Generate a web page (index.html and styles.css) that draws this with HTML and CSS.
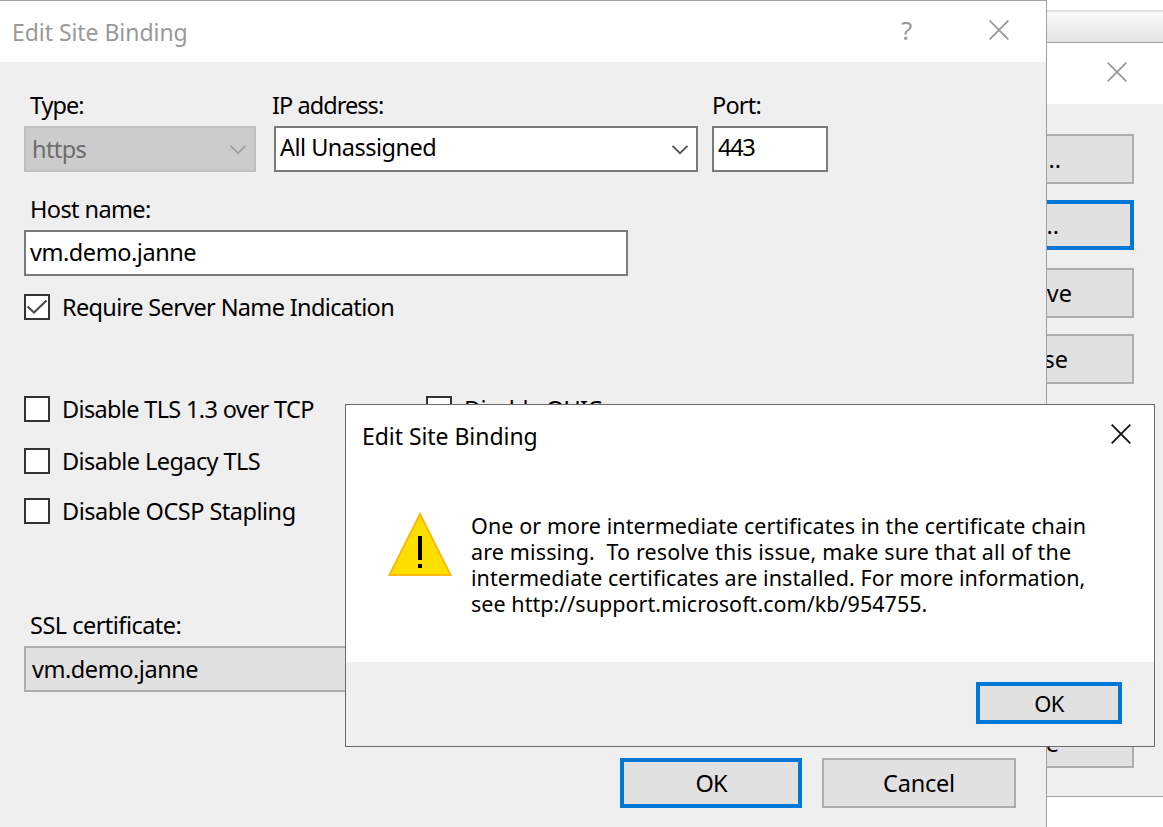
FILE: index.html
```html
<!DOCTYPE html>
<html lang="en">
<head>
<meta charset="utf-8">
<title>Edit Site Binding</title>
<link rel="stylesheet" href="styles.css">
</head>
<body>
<div class="desktop">
  <div class="toolbar"></div>

  <section class="window bindings">
    <header class="titlebar">
      <svg class="close" viewBox="0 0 20 20"><path d="M.7.7 19.3 19.3M19.3.7.7 19.3"/></svg>
    </header>
    <div class="side">
      <button class="btn add"><span>Add...</span></button>
      <button class="btn primary edit"><span>Edit...</span></button>
      <button class="btn remove"><span>Remove</span></button>
      <button class="btn browse"><span>Browse</span></button>
      <button class="btn dismiss"><span>Close</span></button>
    </div>
  </section>

  <section class="window editor">
    <header class="titlebar">
      <h1 class="title">Edit Site Binding</h1>
      <span class="help">?</span>
      <svg class="close" viewBox="0 0 20 20"><path d="M.7.7 19.3 19.3M19.3.7.7 19.3"/></svg>
    </header>
    <div class="form">
      <div class="row">
        <div class="group type">
          <label class="t-type">Type:</label>
          <div class="field disabled"><span class="t-https">https</span><svg class="chev" viewBox="0 0 18 12"><path d="M1.5 1.8 9 9.2 16.5 1.8"/></svg></div>
        </div>
        <div class="group ip">
          <label class="t-ip">IP address:</label>
          <div class="field raised"><span class="t-all">All Unassigned</span><svg class="chev" viewBox="0 0 18 12"><path d="M1.5 1.8 9 9.2 16.5 1.8"/></svg></div>
        </div>
        <div class="group port">
          <label class="t-port">Port:</label>
          <div class="field raised"><span class="t-443">443</span></div>
        </div>
      </div>
      <div class="group host">
        <label class="t-host">Host name:</label>
        <div class="field"><span class="t-vm">vm.demo.janne</span></div>
      </div>
      <div class="check sni"><i class="box"><svg viewBox="0 0 22 22"><path d="M1.5 10.5 8 16.5 20.5 4.5"/></svg></i><span class="t-sni">Require Server Name Indication</span></div>
      <div class="pair">
        <div class="check"><i class="box"></i><span class="t-tls13">Disable TLS 1.3 over TCP</span></div>
        <div class="check"><i class="box"></i><span class="t-quic">Disable QUIC</span></div>
      </div>
      <div class="check legacy"><i class="box"></i><span class="t-legacy">Disable Legacy TLS</span></div>
      <div class="check ocsp"><i class="box"></i><span class="t-ocsp">Disable OCSP Stapling</span></div>
      <div class="group ssl">
        <label class="t-ssl">SSL certificate:</label>
        <div class="field"><span class="t-vm">vm.demo.janne</span></div>
      </div>
      <div class="actions">
        <button class="btn primary ok"><span class="t-ok">OK</span></button>
        <button class="btn cancel"><span class="t-cancel">Cancel</span></button>
      </div>
    </div>
  </section>

  <section class="window alert">
    <header class="titlebar">
      <h2 class="title">Edit Site Binding</h2>
      <svg class="close" viewBox="0 0 20 20"><path d="M.7.7 19.3 19.3M19.3.7.7 19.3"/></svg>
    </header>
    <div class="message">
      <svg class="warn" viewBox="0 0 64 64"><path d="M32 2 62.5 63H1.5Z" fill="#fde000" stroke="#ffb90e" stroke-width="2"/><path d="M30 24h4v24h-4zM30 52h4v4h-4z" fill="#000"/></svg>
      <div class="text">
        <p class="l1">One or more intermediate certificates in the certificate chain</p>
        <p class="l2">are missing.&nbsp; To resolve this issue, make sure that all of the</p>
        <p class="l3">intermediate certificates are installed. For more information,</p>
        <p class="l4">see http://support.microsoft.com/kb/954755.</p>
      </div>
    </div>
    <footer class="foot"><button class="btn primary"><span class="t-ok2">OK</span></button></footer>
  </section>
</div>
</body>
</html>
```
FILE: styles.css
```css
* { box-sizing: border-box; }
body { margin: 0; background: #fff; color: #000; font: 23.5px/32px "Noto Sans", "Open Sans", sans-serif; }
h1, h2, p { margin: 0; font: inherit; }
button { font: inherit; color: inherit; padding: 0; }
span, label, h1, h2, p { white-space: nowrap; }
svg { display: block; flex: none; fill: none; }
.desktop { position: relative; width: 1163px; height: 827px; overflow: hidden; padding-top: 10px; }
.toolbar { height: 32px; border-top: 2px solid #e1e1e1; background: linear-gradient(#fbfbfb, #e2e2e2); }
.window { position: absolute; background: #efefef; }
.titlebar { display: flex; height: 61px; background: #fff; }
.close { width: 20px; height: 20px; stroke: #999; stroke-width: 1.8; }

.bindings { left: 700px; top: 42px; width: 500px; height: 755px; border: 1px solid #a0a0a0; }
.bindings .close { margin: 19px 0 0 406px; }
.side { display: flex; flex-direction: column; padding: 30px 0 0 239px; }
.btn { display: flex; align-items: center; justify-content: center; width: 194px; height: 50px; background: #e1e1e1; border: 2px solid #adadad; }
.primary { border: 4px solid #0078d7; }
.side .btn { justify-content: flex-end; }
.add { padding-right: 71px; }
.edit { margin-top: 16px; padding-right: 71px; }
.remove { margin-top: 18px; padding-right: 60px; }
.browse { margin-top: 16px; padding-right: 64px; }
.dismiss { margin-top: 334px; padding-right: 73px; }

.editor { left: 0; top: 0; width: 1047px; height: 840px; border-top: 1px solid #a0a0a0; border-right: 1px solid #a0a0a0; }
.title { font-size: 23px; letter-spacing: -.05px; }
.editor .title { width: 890px; padding: 15px 0 0 12px; color: #999; }
.help { width: 99px; padding: 13px 0 0 11px; font-size: 26px; color: #999; }
.editor .close { margin-top: 19px; }
.form { padding: 27px 0 0 24px; }
.row { display: flex; }
label { display: block; height: 37px; padding-left: 6px; }
.field { display: flex; justify-content: space-between; align-items: center; height: 46px; padding: 0 7px 0 4px; border: 2px solid #7a7a7a; background: #fff; }
.disabled { color: #6d6d6d; background: #ccc; border-color: #bfbfbf; padding-left: 6px; }
.raised span { padding-bottom: 4px; }
.chev { width: 18px; height: 12px; stroke: #555; stroke-width: 1.8; margin-top: 2px; }
.disabled .chev { stroke: #a0a0a0; }
.type { width: 232px; }
.ip { width: 424px; margin-left: 18px; }
.port { width: 116px; margin-left: 14px; }
.port label { padding-left: 0; }
.ip label { padding-left: 0; margin-left: -2px; }
.host { width: 604px; margin-top: 21px; }
.host span { padding-bottom: 2px; }
.check { display: flex; align-items: center; height: 26px; gap: 12px; }
.box { width: 26px; height: 26px; flex: none; border: 2px solid #333; background: #fff; }
.box svg { width: 22px; height: 22px; stroke: #4d4d4d; stroke-width: 2.2; }
.sni { margin-top: 18px; }
.pair { display: grid; grid-template-columns: 402px 300px; margin-top: 76px; }
.legacy { margin-top: 26px; }
.ocsp { margin-top: 24px; }
.ssl { width: 604px; margin-top: 85px; }
.ssl .field { background: #e1e1e1; border-color: #adadad; padding-left: 6px; }
.actions { display: flex; gap: 20px; margin: 66px 0 0 596px; }
.ok { width: 182px; }

.alert { left: 345px; top: 404px; width: 810px; height: 343px; border: 1px solid #6b6b6b; }
.alert .title { width: 765px; padding: 15px 0 0 16px; }
.alert .close { margin-top: 19px; stroke: #111; }
.message { display: flex; height: 196px; padding: 46px 0 0 42px; background: #fff; }
.warn { width: 64px; height: 64px; }
.text { margin: 1px 0 0 19px; font-size: 21.5px; line-height: 26px; }
.foot { display: flex; justify-content: flex-end; padding: 20px 32px 0 0; }
.foot .btn { width: 146px; height: 42px; font-size: 22px; }

/* Tracking per caption */
.t-type { letter-spacing: -1px; }
.t-https { letter-spacing: -.6px; }
.t-ip { letter-spacing: -.95px; }
.t-all { letter-spacing: -.52px; }
.t-port { letter-spacing: -.8px; }
.t-443 { letter-spacing: -1.3px; }
.t-host { letter-spacing: -.6px; }
.t-vm { letter-spacing: -.45px; }
.t-sni { letter-spacing: -.65px; }
.t-tls13 { letter-spacing: -.66px; }
.t-quic { letter-spacing: -.7px; }
.t-legacy { letter-spacing: -.57px; }
.t-ocsp { letter-spacing: -.5px; }
.t-ssl { letter-spacing: -.52px; }
.t-ok { letter-spacing: -1px; }
.t-ok2 { letter-spacing: -.6px; }
.t-cancel { letter-spacing: -.2px; }
.l1 { letter-spacing: .09px; }
.l2 { letter-spacing: .14px; }
.l3 { letter-spacing: .065px; }
.l4 { letter-spacing: .04px; }
```
